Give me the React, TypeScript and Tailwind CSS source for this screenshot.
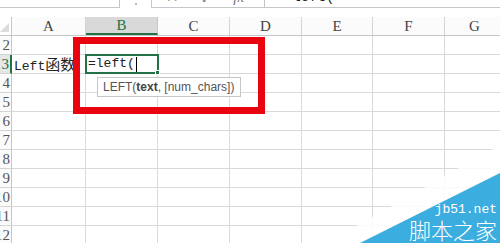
import React from "react"

const cols = [
  { key: "A", w: "w-[74px]" },
  { key: "B", w: "w-[72px]" },
  { key: "C", w: "w-[72px]" },
  { key: "D", w: "w-[72px]" },
  { key: "E", w: "w-[71px]" },
  { key: "F", w: "w-[72px]" },
  { key: "G", w: "w-[60px]" },
]

const rows = [2, 3, 4, 5, 6, 7, 8, 9, 10, 11, 12]

export default function App() {
  return (
    <div className="relative w-[500px] h-[243px] overflow-hidden bg-white font-['Liberation_Serif','Noto_Sans_CJK_SC',serif] text-[#222]">
      {/* Formula bar, scrolled mostly out of view */}
      <div className="flex h-[24px] -mt-[16px] items-end">
        <div className="w-[120px] h-full border-r border-b border-[#c6c6c6] pl-[2px] text-[14px] leading-[20px] font-['Liberation_Mono',monospace]">
          A23
        </div>
        <div className="w-[31px] h-full flex items-end justify-center text-[#999] text-[12px] leading-[18px]">⋮</div>
        <div className="flex-1 h-full border-l border-b border-[#c6c6c6] flex items-end">
          <div className="w-[112px] h-full flex items-end gap-[22px] pl-[14px] text-[#777] text-[15px] leading-[20px]">
            <span>✕</span>
            <span>✓</span>
            <span className="italic font-['Liberation_Serif',serif]">fx</span>
          </div>
          <div className="h-[18px] border-l border-[#c6c6c6]" />
          <div className="pl-[19px] text-[14px] leading-[20px] font-['Liberation_Mono',monospace]">=left(</div>
        </div>
      </div>

      <div className="h-[9px]" />

      {/* Column headers */}
      <div className="flex h-[19px] border-b border-[#c6c6c6]">
        <div className="w-[12px] shrink-0 border-r border-[#c6c6c6] relative">
          <svg width="11" height="18" className="absolute left-0 top-0">
            <polygon points="0,15 9,6 9,15" fill="#dcdcdc" />
          </svg>
        </div>
        {cols.map((c) =>
          c.key === "B" ? (
            <div
              key={c.key}
              className={`${c.w} shrink-0 bg-[#d9d9d9] border-r border-[#c6c6c6] border-b-2 border-b-[#217346] flex items-center justify-center text-[15px] text-[#217346]`}
            >
              {c.key}
            </div>
          ) : (
            <div
              key={c.key}
              className={`${c.w} shrink-0 bg-[#fbfbfb] border-r border-[#d4d4d4] flex items-center justify-center text-[15px] text-[#444]`}
            >
              {c.key}
            </div>
          )
        )}
      </div>

      {/* Rows */}
      {rows.map((r) => (
        <div key={r} className="flex h-[19px]">
          <div
            className={`w-[12px] shrink-0 border-b border-[#d4d4d4] flex justify-end overflow-hidden text-[15px] leading-[18px] ${
              r === 3 ? "border-r-2 border-r-[#217346] text-[#217346] bg-[#e6e6e6]" : "border-r border-r-[#c6c6c6] text-[#555] bg-[#fbfbfb]"
            }`}
          >
            <span className="whitespace-nowrap pr-[1px]">{r}</span>
          </div>
          {cols.map((c) => (
            <div
              key={c.key}
              className={`${c.w} shrink-0 border-r border-b border-[#d9d9d9] relative text-[13px] leading-[18px] font-['Liberation_Mono','Noto_Sans_CJK_SC',monospace]`}
            >
              {r === 3 && c.key === "A" && (
                <span className="absolute left-[2px] top-0 whitespace-nowrap">
                  Left<span className="text-[15px] font-['Noto_Sans_CJK_SC',sans-serif]">函数</span>
                </span>
              )}
              {r === 3 && c.key === "B" && (
                <div className="absolute -left-[1px] -top-[1px] w-[74px] h-[20px] border-2 border-[#217346] z-10 flex items-center pl-[1px]">
                  <span>=left(</span>
                  <span className="w-[1px] h-[15px] bg-black ml-[1px]" />
                  <span className="absolute -right-[3px] -bottom-[3px] w-[5px] h-[5px] bg-[#217346] border border-white" />
                </div>
              )}
            </div>
          ))}
        </div>
      ))}

      {/* Function tooltip */}
      <div className="absolute left-[97px] top-[77px] w-[144px] h-[20px] bg-white border border-[#c6c6c6] z-20 flex items-center pl-[5px] text-[12px] text-[#555] font-['Liberation_Sans',sans-serif] whitespace-nowrap">
        LEFT(<b className="text-[#444]">text</b>, [num_chars])
      </div>

      {/* Red annotation box */}
      <div className="absolute left-[73px] top-[37px] w-[192px] h-[77px] border-[7px] border-[#e8050f] z-30" />

      {/* Watermark */}
      <svg className="absolute right-0 bottom-0 z-40" width="180" height="110" viewBox="320 133 180 110">
        <polygon points="326,243 500,145 500,243" fill="#ffffff" opacity="0.85" />
        <polygon points="360,243 500,173 500,243" fill="#3badde" />
      </svg>
      <div className="absolute right-[3px] top-[203px] z-50 text-white text-[13px] leading-[13px] font-['Liberation_Mono',monospace]">
        jb51.net
      </div>
      <div className="absolute right-[3px] top-[218px] z-50 text-white text-[22px] leading-[22px] font-['Noto_Sans_CJK_SC',sans-serif] font-light">
        脚本之家
      </div>
    </div>
  )
}
